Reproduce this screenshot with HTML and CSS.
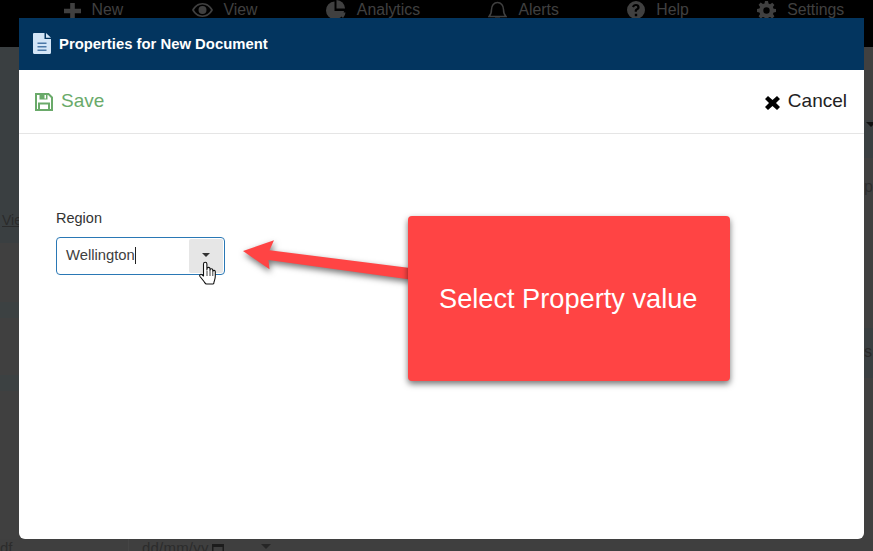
FILE: index.html
```html
<!DOCTYPE html>
<html lang="en">
<head>
<meta charset="utf-8">
<title>Properties for New Document</title>
<link rel="stylesheet" href="styles.css">
</head>
<body>
<div class="page">
  <nav class="nav">
    <span class="nav-item"><svg class="nav-icon" width="17" height="17" viewBox="0 0 17 17"><path d="M6.2 1h4.6v5.7H17v4.6h-6.2V17H6.2v-5.7H0V6.700h6.200z"/></svg>New</span>
    <span class="nav-item"><svg class="nav-icon" width="21" height="14" viewBox="0 0 21 14"><path fill-rule="evenodd" d="M10.500 0C15 0 19 2.800 21 7c-2 4.200-6 7-10.500 7S2 11.200 0 7C2 2.800 6 0 10.500 0zm0 1.600C7 1.600 3.800 3.700 2 7c1.800 3.300 5 5.400 8.500 5.400S17.200 10.300 19 7c-1.800-3.300-5-5.400-8.500-5.400zM10.500 3a4 4 0 1 1 0 8 4 4 0 0 1 0-8z"/></svg>View</span>
    <span class="nav-item"><svg class="nav-icon" width="20" height="20" viewBox="0 0 20 20"><path d="M8.500 1.500V11h9.500A9 9 0 1 1 8.500 1.500z"/><path d="M10.500 0a9 9 0 0 1 8.600 8.500h-8.600z"/><path d="M11.500 12.500h8a9 9 0 0 1-2.500 5.500z"/></svg>Analytics</span>
    <span class="nav-item"><svg class="nav-icon" width="19" height="19" viewBox="0 0 19 19"><path fill="none" stroke="currentColor" stroke-width="1.500" d="M1 15.500c2-2 2.500-4 2.500-7C3.500 4.500 6 1.500 9.500 1.500s6 3 6 7c0 3 .5 5 2.500 7z"/><path d="M7 16.500h5a2.500 2.500 0 0 1-5 0z"/></svg>Alerts</span>
    <span class="nav-item"><svg class="nav-icon" width="18" height="18" viewBox="0 0 18 18"><path fill-rule="evenodd" d="M9 0a9 9 0 1 1 0 18A9 9 0 0 1 9 0zM7.800 12.800v2.400h2.400v-2.400zM9 3C6.900 3 5.500 4.100 5 5.800l2 .8c.3-1 1-1.500 1.900-1.500.8 0 1.400.4 1.400 1.100 0 .6-.4 1-1.100 1.400-1 .6-1.500 1.300-1.500 2.300v.9h2.200v-.6c0-.5.3-.8 1-1.200 1-.6 1.700-1.400 1.700-2.800C12.600 4.200 11 3 9 3z"/></svg>Help</span>
    <span class="nav-item"><svg class="nav-icon" width="19" height="19" viewBox="0 0 19 19"><path fill-rule="evenodd" d="M8 0h3l.5 2.600 1.600.7 2.200-1.500 2.100 2.100-1.500 2.200.7 1.600L19 8v3l-2.400.5-.7 1.600 1.500 2.200-2.100 2.100-2.200-1.500-1.600.7L11 19H8l-.5-2.400-1.600-.7-2.200 1.500-2.100-2.100 1.500-2.200-.7-1.600L0 11V8l2.400-.5.7-1.600-1.500-2.200 2.100-2.100 2.200 1.500 1.600-.7zm1.500 6.300a3.200 3.200 0 1 0 0 6.400 3.200 3.200 0 0 0 0-6.400z"/></svg>Settings</span>
  </nav>
  <div class="backdrop">
    <div class="back-top">
      <div class="back-col back-left">
        <div class="tint-a left-link"><a class="back-link">View</a></div>
        <div class="tint-b h-59"></div>
        <div class="tint-c h-16"></div>
        <div class="tint-b h-57"></div>
        <div class="tint-c h-16"></div>
        <div class="tint-b fill"></div>
      </div>
      <div class="back-col back-right">
        <div class="tint-b h-73"></div>
        <div class="tint-a h-38 right-caret"><span class="caret-dark"></span></div>
        <div class="tint-b h-170 right-letter-p"><span>p</span></div>
        <div class="tint-a h-50 right-letter-s"><span>s</span></div>
        <div class="tint-b fill"></div>
      </div>
    </div>
    <div class="back-bottom">
      <span class="df">df</span>
      <span class="date">dd/mm/yy<svg class="cal" width="12" height="12" viewBox="0 0 12 12"><path fill-rule="evenodd" d="M0 1h12v11H0zm1.500 3v6.500h9V4z"/></svg></span>
      <span class="caret-bottom"></span>
    </div>
  </div>
</div>

<section class="modal">
  <header class="modal-head">
    <svg class="file-icon" width="19" height="21" viewBox="0 0 19 21"><path fill="#d3e5f7" d="M1 0h10.500v6H18v13.500a1.500 1.500 0 0 1-1.500 1.500h-15A1.500 1.500 0 0 1 0 19.500V1a1 1 0 0 1 1-1z"/><path fill="#d3e5f7" d="M13 0l5 4.800h-5z"/><path fill="#4b78a8" d="M4.500 9.500h9v1.500h-9zm0 3.500h9v1.500h-9zm0 3.500h9V18h-9z"/></svg>
    <h1 class="modal-title">Properties for New Document</h1>
  </header>
  <div class="toolbar">
    <button class="tool save"><svg width="18" height="18" viewBox="0 0 18 18"><path fill="none" stroke="#6aaa6a" stroke-width="2" d="M1 1h12.500L17 4.500V17H1z"/><path fill="#6aaa6a" d="M4.500 1h8v5.500h-8z"/><path fill="#fff" d="M9.500 2h1.500v3.500H9.500z"/><path fill="none" stroke="#6aaa6a" stroke-width="2" d="M4 17v-6.500h10V17"/></svg><span>Save</span></button>
    <button class="tool cancel"><svg width="15" height="14" viewBox="0 0 15 14"><path d="M3 0l4.500 4L12 0l3 3-4 4 4 4-3 3-4.500-4L3 14l-3-3 4-4-4-4z"/></svg><span>Cancel</span></button>
  </div>
  <div class="modal-body">
    <label class="field-label">Region</label>
    <div class="combo">
      <span class="combo-value">Wellington</span><span class="text-caret"></span>
      <span class="combo-btn"><span class="combo-caret"></span></span>
    </div>
  </div>
</section>

<svg class="arrow" width="180" height="50" viewBox="0 0 180 50"><path fill="#ff4444" d="M3 16L34 5.300 29.500 15.300 170 33v11.500L28.500 25l1 9.300z"/></svg>
<div class="callout">Select Property value</div>
<svg class="hand" width="17" height="24" viewBox="0 0 17 24"><path fill="#fff" stroke="#111" stroke-width="1.100" stroke-linejoin="round" d="M4.500 15V3a1.700 1.700 0 0 1 3.400 0v6l.1-1.200a1.500 1.500 0 0 1 3 .2v1.200a1.400 1.400 0 0 1 2.800 0v1a1.300 1.300 0 0 1 2.500.3V15c0 3-.8 4.300-1.300 6 0 .8-.2 2-1 2H7.500c-1.200 0-1.500-1-2.500-2.500L1 15.500c-.8-1.200.2-2.800 1.800-2z"/><path fill="none" stroke="#111" stroke-width=".8" d="M8 10v5M11 9.500V15M13.800 10.500V15"/></svg>
</body>
</html>
```
FILE: styles.css
```css
* { box-sizing: border-box; }
html, body { margin: 0; height: 100%; overflow: hidden; }
body { font-family: "Liberation Sans", Arial, sans-serif; background: #3f3f3f; color: #333; }
.page { height: 551px; display: flex; flex-direction: column; }
.nav { height: 47px; background: #000; display: flex; align-items: flex-start; gap: 68.400px; padding: 1px 0 0 63.500px; color: #404040; font-size: 15.800px; line-height: 18px; }
.nav-item { display: flex; align-items: center; gap: 11px; height: 18px; }
.nav-icon { fill: currentColor; flex: none; }
.backdrop { flex: 1; display: flex; flex-direction: column; min-height: 0; }
.back-top { flex: 1; display: flex; justify-content: space-between; min-height: 0; }
.back-col { display: flex; flex-direction: column; }
.back-left { width: 19px; }
.back-right { width: 9px; }
.tint-a { background: #3a3f41; }
.tint-b { background: #404040; }
.tint-c { background: #3c4142; }
.left-link { height: 196px; padding: 166px 0 0 2px; font-size: 14px; line-height: 15px; }
.back-link { color: #2b2b2b; text-decoration: underline; white-space: nowrap; }
.h-59 { height: 59px; }
.h-16 { height: 16px; }
.h-57 { height: 57px; }
.h-73 { height: 73px; }
.h-38 { height: 38px; }
.h-170 { height: 170px; }
.h-50 { height: 50px; }
.fill { flex: 1; }
.right-caret { padding: 2px 0 0 2px; }
.caret-dark { display: block; width: 0; height: 0; border: 5px solid transparent; border-top: 5px solid #111; }
.right-letter-p { padding-top: 20px; color: #2e2e2e; font-size: 16px; line-height: 18px; }
.right-letter-s { padding-top: 15px; color: #2a2a2a; font-size: 16px; line-height: 18px; }
.back-bottom { height: 12px; display: flex; align-items: flex-start; background: #3f3f3f; color: #2c2c2c; font-size: 15px; line-height: 17px; }
.df { width: 128px; }
.date { width: 113px; height: 12px; border-left: 1px solid #454545; padding-left: 13px; display: flex; letter-spacing: .2px; white-space: nowrap; }
.cal { fill: #1c1c1c; margin: 4px 0 0 3px; flex: none; }
.caret-bottom { margin: 5px 0 0 20px; width: 0; height: 0; border: 5px solid transparent; border-top: 5px solid #262626; }

.modal { position: absolute; left: 19px; top: 18px; width: 845px; height: 521px; background: #fff; border-radius: 0 0 6px 6px; display: flex; flex-direction: column; overflow: hidden; }
.modal-head { height: 52px; flex: none; background: #03355f; display: flex; align-items: center; gap: 7px; padding-left: 14px; }
.file-icon { flex: none; margin-top: -2px; }
.modal-title { margin: 0; color: #fff; font-size: 14.850px; font-weight: 700; line-height: 16px; }
.toolbar { height: 64px; flex: none; border-bottom: 1px solid #e5e5e5; display: flex; align-items: center; justify-content: space-between; padding: 0 17px 2px 16px; }
.tool { border: 0; background: none; padding: 0; font: inherit; font-size: 19px; line-height: 22px; display: flex; align-items: center; }
.save { color: #6aaa6a; gap: 8px; }
.save svg { margin-top: 3px; }
.cancel { color: #222; gap: 8px; }
.cancel svg { margin-top: 4px; }
.modal-body { flex: 1; padding: 76px 0 0 37px; }
.field-label { display: block; font-size: 14.500px; line-height: 17px; color: #333; margin-bottom: 10px; }
.combo { width: 169px; height: 38px; border: 1px solid #2a78b5; border-radius: 4px; display: flex; align-items: center; padding: 1px 1px 1px 9px; }
.combo-value { font-size: 14.800px; line-height: 18px; color: #404040; margin-top: -2px; }
.text-caret { width: 1px; height: 17px; background: #222; margin-top: -2px; }
.combo-btn { margin-left: auto; width: 34px; height: 34px; background: #e6e6e6; border-radius: 2px; display: flex; justify-content: center; padding-top: 14px; }
.combo-caret { width: 0; height: 0; border: 4.500px solid transparent; border-top: 4.500px solid #333; }

.arrow { position: absolute; left: 240px; top: 235px; overflow: visible; filter: drop-shadow(1px 3px 3px rgba(0,0,0,.55)); }
.callout { position: absolute; left: 408px; top: 216px; width: 322px; height: 165px; background: #ff4444; border-radius: 4px; box-shadow: 0 3px 6px rgba(0,0,0,.55); color: #fff; font-size: 27.200px; display: flex; align-items: center; padding-left: 31px; }
.hand { position: absolute; left: 199px; top: 261px; }
```
